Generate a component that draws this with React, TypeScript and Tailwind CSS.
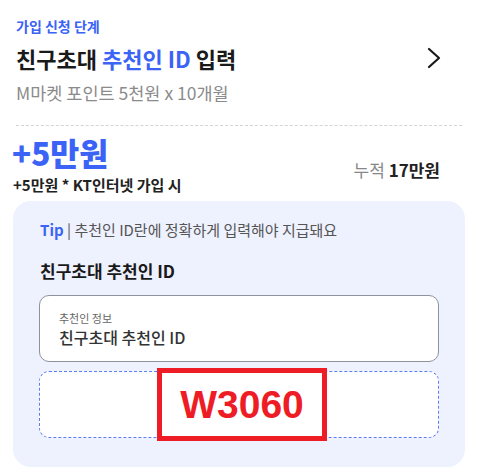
export default function App() {
  return (
    <div
      className="w-[478px] h-[475px] bg-white overflow-hidden"
      style={{ fontFamily: '"Noto Sans CJK KR", "Noto Sans", sans-serif' }}
    >
      {/* 상단 단계 정보 */}
      <div className="pl-4 pr-[36px] pt-[17px]">
        <p className="text-[14px] leading-[18px] font-bold text-[#3b63f6]">가입 신청 단계</p>
        <div className="mt-[9px] flex items-center justify-between">
          <h1 className="text-[22px] leading-[28px] font-bold text-[#1a1a1a]">
            친구초대 <span className="text-[#3b63f6]">추천인 ID</span> 입력
          </h1>
          <svg width="16" height="22" viewBox="0 0 16 22" fill="none">
            <path d="M3 2 L13 11 L3 20" stroke="#1a1a1a" strokeWidth="2.2" strokeLinecap="round" strokeLinejoin="round" />
          </svg>
        </div>
        <p className="mt-[9px] text-[17.5px] leading-[24px] text-[#8b8b8b]">M마켓 포인트 5천원 x 10개월</p>
      </div>

      <div className="mx-4 mt-[20px] border-t border-dashed border-[#d4d4d4]" />

      {/* 혜택 금액 */}
      <div className="flex items-end justify-between pl-[12px] pr-[38px]">
        <div>
          <p className="mt-[8px] text-[31.5px] leading-[36px] font-black text-[#3b63f6]">+5만원</p>
          <p className="mt-[5px] pl-[1px] text-[15px] leading-[20px] font-bold text-[#222]">+5만원 * KT인터넷 가입 시</p>
        </div>
        <p className="mb-[14px] text-[17px] leading-[22px] text-[#888]">
          누적 <span className="font-bold text-[#222]">17만원</span>
        </p>
      </div>

      {/* 입력 카드 */}
      <div className="mx-[13px] mt-[6px] rounded-[18px] bg-[#eef1fe] px-[26px] pt-[19px] pb-[29px]">
        <p className="pl-[1px] text-[15px] leading-[20px] text-[#555]">
          <span className="font-bold text-[#3b63f6]">Tip</span> | 추천인 ID란에 정확하게 입력해야 지급돼요
        </p>
        <p className="mt-[20px] pl-[1px] text-[17px] leading-[22px] font-bold text-[#1a1a1a]">친구초대 추천인 ID</p>

        <div className="mt-[13px] h-[67px] rounded-[10px] border border-[#8e929b] bg-white px-[19px] pt-[15px]">
          <p className="text-[11px] leading-[14px] text-[#666]">추천인 정보</p>
          <p className="mt-[2px] text-[16px] leading-[20px] font-medium text-[#333]">친구초대 추천인 ID</p>
        </div>

        <div className="relative mt-[9px] h-[67px] rounded-[10px] border-[1.5px] border-dashed border-[#5b7cf5] bg-white">
          <div className="absolute left-[117px] top-[-4px] flex h-[73px] w-[170px] items-center justify-center border-[5px] border-[#ee1c25] bg-white">
            <span
              className="text-[39px] leading-none font-bold text-[#ee1c25]"
              style={{ fontFamily: '"Liberation Sans", Arial, sans-serif' }}
            >
              W3060
            </span>
          </div>
        </div>
      </div>
    </div>
  );
}
